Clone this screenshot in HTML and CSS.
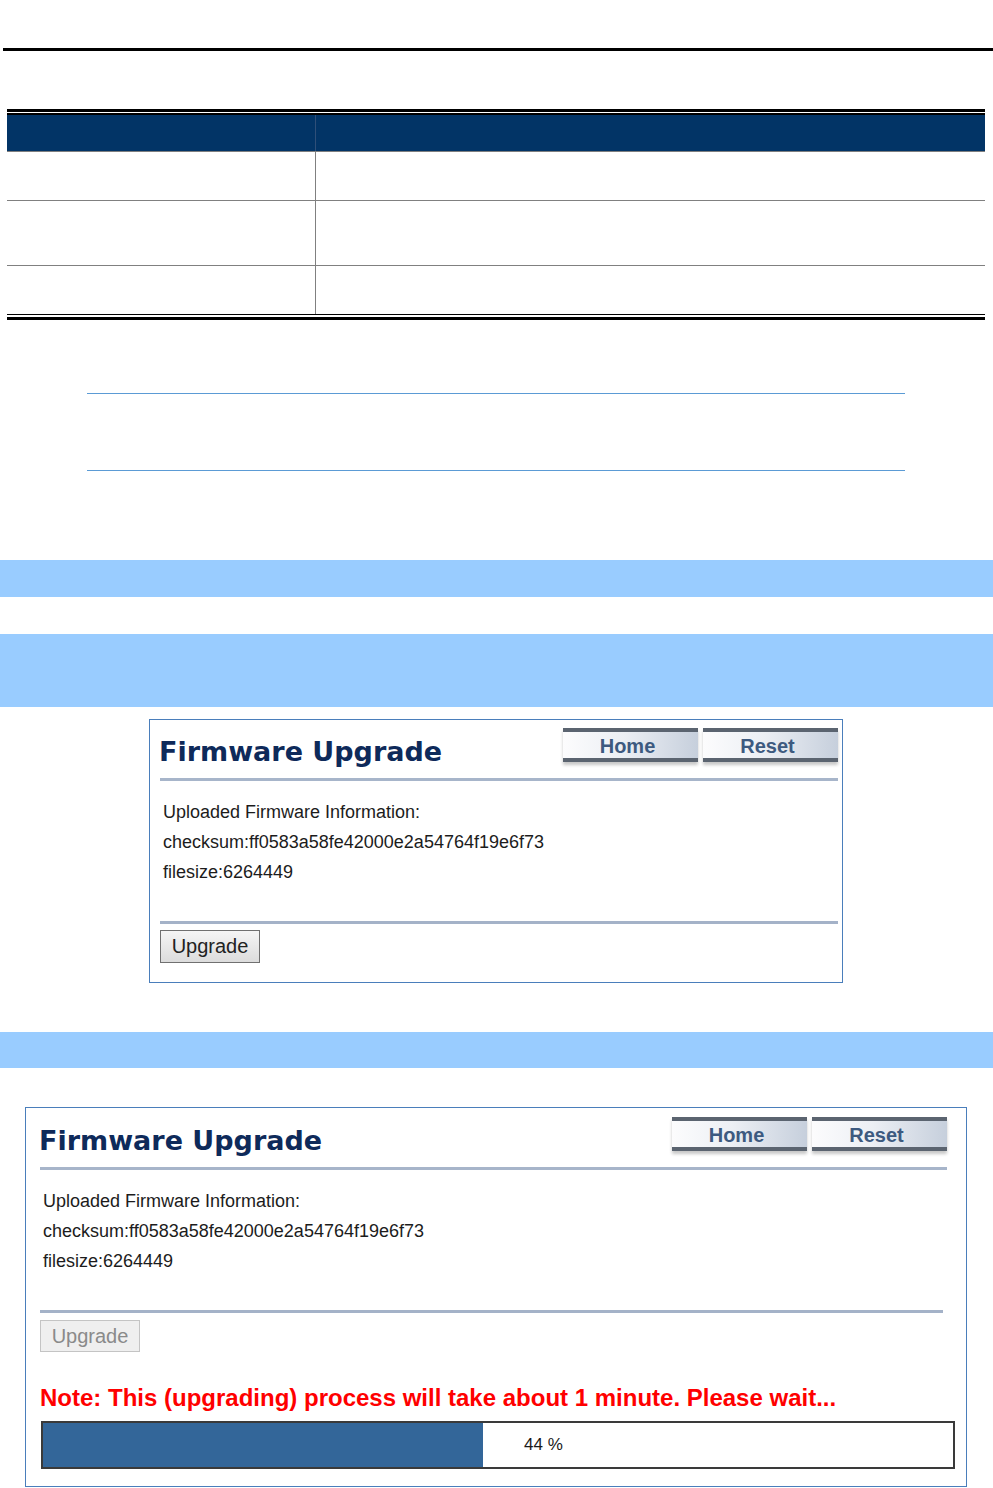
FILE: index.html
```html
<!DOCTYPE html>
<html>
<head>
<meta charset="utf-8">
<title>Firmware Upgrade</title>
<link rel="stylesheet" href="styles.css">
</head>
<body>
<div class="top-rule"></div>

<div class="spec">
  <div class="spec-inner">
    <div class="spec-row spec-head"><div class="cell c1"></div><div class="cell c2"></div></div>
    <div class="spec-row row-a"><div class="cell c1"></div><div class="cell c2"></div></div>
    <div class="spec-row row-b"><div class="cell c1"></div><div class="cell c2"></div></div>
    <div class="spec-row row-c"><div class="cell c1"></div><div class="cell c2"></div></div>
  </div>
</div>

<div class="note-box"></div>

<div class="band band-a"></div>
<div class="band band-b"></div>

<section class="panel panel-sm">
  <div class="panel-head">
    <h1 class="panel-title">Firmware Upgrade</h1>
    <div class="nav-btns">
      <span class="nav-btn">Home</span>
      <span class="nav-btn">Reset</span>
    </div>
  </div>
  <div class="info">
    <p>Uploaded Firmware Information:</p>
    <p>checksum:ff0583a58fe42000e2a54764f19e6f73</p>
    <p>filesize:6264449</p>
  </div>
  <div class="sep"></div>
  <button class="upgrade">Upgrade</button>
</section>

<div class="band band-c"></div>

<section class="panel panel-lg">
  <div class="panel-head">
    <h1 class="panel-title">Firmware Upgrade</h1>
    <div class="nav-btns">
      <span class="nav-btn">Home</span>
      <span class="nav-btn">Reset</span>
    </div>
  </div>
  <div class="info">
    <p>Uploaded Firmware Information:</p>
    <p>checksum:ff0583a58fe42000e2a54764f19e6f73</p>
    <p>filesize:6264449</p>
  </div>
  <div class="sep"></div>
  <button class="upgrade" disabled>Upgrade</button>
  <p class="wait-note">Note: This (upgrading) process will take about 1 minute. Please wait...</p>
  <div class="progress">
    <div class="progress-fill" style="width: 440px"></div>
    <span class="progress-label">44 %</span>
  </div>
</section>
</body>
</html>
```

FILE: styles.css
```css
html, body {
  margin: 0;
  padding: 0;
  background: #ffffff;
}

body {
  font-family: "Liberation Sans", Arial, sans-serif;
  color: #1c1c1c;
}

.top-rule {
  margin: 48px 0 0 3px;
  height: 3px;
  background: #000;
}

/* spec table */
.spec {
  margin: 58px 8px 0 7px;
  border-top: 3px solid #000;
  border-bottom: 3px solid #000;
  padding: 1px 0 2px;
}

.spec-inner {
  border-top: 2px solid #000;
  border-bottom: 1px solid #000;
}

.spec-row {
  display: grid;
  grid-template-columns: 309px 1fr;
}

.spec-row .c1 {
  border-right: 1px solid #808080;
}

.spec-head {
  height: 36px;
  background: #023466;
  border-bottom: 1px solid #7f7f7f;
}

.spec-head .c1 {
  border-right-color: #2f4f78;
}

.row-a {
  height: 48px;
  border-bottom: 1px solid #808080;
}

.row-b {
  height: 64px;
  border-bottom: 1px solid #808080;
}

.row-c {
  height: 48px;
}

/* note box */
.note-box {
  margin: 73px 0 0 87px;
  width: 818px;
  height: 76px;
  border-top: 1px solid #5b9bd5;
  border-bottom: 1px solid #5b9bd5;
}

/* bands */
.band {
  background: #99ccff;
}

.band-a {
  margin-top: 89px;
  height: 37px;
}

.band-b {
  margin-top: 37px;
  height: 73px;
}

.band-c {
  margin-top: 49px;
  height: 36px;
}

/* panels */
.panel {
  border: 1px solid #4a7ebb;
  box-sizing: border-box;
}

.panel-sm {
  margin: 12px 0 0 149px;
  width: 694px;
  padding: 0 4px 19px 10px;
}

.panel-lg {
  margin: 39px 0 0 25px;
  width: 942px;
  padding: 0 19px 17px 14px;
}

.panel-head {
  display: flex;
  justify-content: space-between;
  align-items: flex-start;
  padding-top: 8px;
  border-bottom: 3px solid #a7b5ca;
}

.panel-lg .panel-head {
  padding-top: 9px;
}

.panel-title {
  margin: 8px 0 10px -1px;
  font-family: "DejaVu Sans", Verdana, sans-serif;
  font-weight: bold;
  font-size: 27px;
  line-height: 32px;
  color: #0e2a5a;
}

.nav-btns {
  display: flex;
  gap: 5px;
}

.nav-btn {
  display: flex;
  align-items: center;
  justify-content: center;
  box-sizing: border-box;
  width: 135px;
  height: 34px;
  padding: 2px 6px 0 0;
  border-top: 4px solid #5b6470;
  border-bottom: 4px solid #5b6470;
  background: linear-gradient(to right, #fcfcfd 0%, #eceff4 45%, #c6cfdc 100%);
  box-shadow: 0 3px 3px rgba(0, 0, 0, 0.22);
  font-family: "Liberation Sans", Arial, sans-serif;
  font-weight: bold;
  font-size: 20px;
  color: #3d5a80;
}

.info {
  margin-top: 16px;
  padding-left: 3px;
  font-size: 18px;
  line-height: 30px;
}

.info p {
  margin: 0;
}

.sep {
  margin-top: 34px;
  height: 3px;
  background: #a4b2c8;
}

.panel-lg .sep {
  margin-right: 4px;
}

.upgrade {
  display: block;
  margin: 6px 0 0;
  padding: 0;
  width: 100px;
  height: 33px;
  border: 1px solid #707070;
  background: linear-gradient(#f5f5f5, #dcdcdc);
  font-family: "Liberation Sans", Arial, sans-serif;
  font-size: 20px;
  color: #222;
}

.upgrade:disabled {
  margin-top: 7px;
  height: 32px;
  border-color: #c4c4c4;
  background: #efefef;
  color: #8a8a8a;
}

.wait-note {
  margin: 31px 0 0;
  font-size: 24px;
  line-height: 29px;
  font-weight: bold;
  color: #ff0000;
}

.progress {
  margin: 9px 0 0 1px;
  width: 914px;
  height: 48px;
  box-sizing: border-box;
  border: 2px solid #3a3a3a;
  display: flex;
  align-items: center;
}

.progress-fill {
  align-self: stretch;
  background: #336699;
}

.progress-label {
  padding-left: 41px;
  font-size: 17px;
  color: #1a1a1a;
}
```
